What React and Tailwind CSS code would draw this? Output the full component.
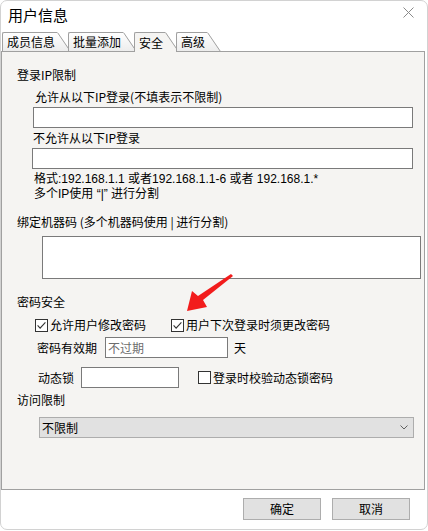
import React from "react";

function Check({ checked }) {
  return (
    <svg width="13" height="13" viewBox="0 0 13 13" className="block shrink-0">
      <rect x="0.5" y="0.5" width="12" height="12" fill="#fff" stroke="#333" />
      {checked && (
        <path d="M2.6 6.4 L5.1 9.1 L10.4 3.3" fill="none" stroke="#333" strokeWidth="1.1" />
      )}
    </svg>
  );
}

function Tab({ label, active, id }) {
  const grad = `tabg${id}`;
  return (
    <div className={`relative flex h-[20px] ${id > 0 ? "-ml-[3px]" : "ml-px"}`}>
      <div
        className={`flex items-center border-l border-t border-[#a0a0a0] rounded-tl-[2px] pl-[4px] pr-[2px] leading-[16px] ${
          active ? "bg-[#f5f4f2]" : "border-b bg-linear-to-b from-white to-[#ececec]"
        }`}
      >
        {label}
      </div>
      <svg width="14" height="20" viewBox="0 0 14 20" className="block">
        <defs>
          <linearGradient id={grad} x1="0" y1="0" x2="0" y2="1">
            <stop offset="0" stopColor="#ffffff" />
            <stop offset="1" stopColor="#ececec" />
          </linearGradient>
        </defs>
        <polygon points="0,0 1,0 14,20 0,20" fill={active ? "#f5f4f2" : `url(#${grad})`} />
        <line x1="0.5" y1="0.5" x2="13.8" y2="20" stroke="#a0a0a0" />
        {!active && <line x1="0" y1="19.5" x2="14" y2="19.5" stroke="#a0a0a0" />}
      </svg>
    </div>
  );
}

export default function App() {
  return (
    <div className="relative w-[428px] h-[531px] bg-white font-['Noto_Sans_CJK_SC','Noto_Sans',sans-serif] text-black overflow-hidden">
      <div className="w-[428px] h-[530px] border border-[#d2d2d2] rounded-[7px] bg-white flex flex-col">
        {/* title bar */}
        <div className="h-[31px] flex items-start justify-between">
          <div className="ml-[7px] mt-[4px] text-[15px] leading-[20px]">用户信息</div>
          <svg width="11" height="11" viewBox="0 0 11 11" className="mt-[6px] mr-[13px] block">
            <path d="M0.5 0.5 L10.5 10.5 M10.5 0.5 L0.5 10.5" stroke="#8a8a8a" strokeWidth="1" fill="none" />
          </svg>
        </div>

        {/* tabs */}
        <div className="relative z-10 flex h-[20px] text-[12px]">
          <Tab id={0} label="成员信息" />
          <Tab id={1} label="批量添加" />
          <Tab id={2} label="安全" active />
          <Tab id={3} label="高级" />
        </div>

        {/* panel */}
        <div className="-mt-px w-[424px] h-[439px] shrink-0 border border-[#a0a0a0] bg-[#f5f4f2] flex flex-col text-[12px] leading-[16px]">
          <div className="ml-[15px] mt-[15px]">登录IP限制</div>
          <div className="ml-[33px] mt-[6px]">允许从以下IP登录(不填表示不限制)</div>
          <div className="ml-[31px] mt-[2px] w-[380px] h-[21px] border border-[#7a7a7a] bg-white" />
          <div className="ml-[31px] mt-[2px]">不允许从以下IP登录</div>
          <div className="ml-[30px] mt-[2px] w-[381px] h-[21px] border border-[#7a7a7a] bg-white" />
          <div className="ml-[32px] mt-[3px] leading-[15px] font-['Liberation_Sans','Noto_Sans_CJK_SC',sans-serif]">
            格式:192.168.1.1 或者192.168.1.1-6 或者 192.168.1.*
          </div>
          <div className="ml-[32px] leading-[15px] font-['Liberation_Sans','Noto_Sans_CJK_SC',sans-serif]">
            多个IP使用 “|” 进行分割
          </div>
          <div className="ml-[15px] mt-[12px]">绑定机器码 (多个机器码使用 | 进行分割)</div>
          <div className="ml-[40px] mt-[6px] w-[379px] h-[43px] border border-[#7a7a7a] bg-white" />

          <div className="ml-[15px] mt-[15px]">密码安全</div>
          <div className="ml-[33px] mt-[7px] flex items-center h-[16px]">
            <div className="flex items-center gap-[2px]">
              <Check checked />
              <span>允许用户修改密码</span>
            </div>
            <div className="ml-[25px] flex items-center gap-[2px]">
              <Check checked />
              <span>用户下次登录时须更改密码</span>
            </div>
          </div>

          <div className="ml-[35px] mt-[4px] flex items-center h-[21px]">
            <span>密码有效期</span>
            <div className="ml-[8px] w-[123px] h-[21px] border border-[#7a7a7a] bg-white pl-[2px] flex items-center text-[#6d6d6d]">
              不过期
            </div>
            <span className="ml-[6px]">天</span>
          </div>

          <div className="ml-[36px] mt-[9px] flex items-center h-[21px]">
            <span>动态锁</span>
            <div className="ml-[7px] w-[98px] h-[21px] border border-[#7a7a7a] bg-white" />
            <div className="ml-[19px] flex items-center gap-[2px]">
              <Check />
              <span>登录时校验动态锁密码</span>
            </div>
          </div>

          <div className="ml-[15px] mt-[4px]">访问限制</div>
          <div className="ml-[37px] mt-[9px] w-[375px] h-[21px] border border-[#adadad] bg-[#e1e1e1] flex items-center justify-between pl-[2px] pr-[5px]">
            <span>不限制</span>
            <svg width="8" height="5" viewBox="0 0 8 5" className="block">
              <path d="M0.5 0.5 L4 4 L7.5 0.5" fill="none" stroke="#606060" strokeWidth="1" />
            </svg>
          </div>
        </div>

        {/* buttons */}
        <div className="mt-[8px] ml-[242px] flex gap-[11px] text-[12px]">
          <div className="w-[78px] h-[22px] border border-[#adadad] bg-[#e1e1e1] flex items-center justify-center">确定</div>
          <div className="w-[78px] h-[22px] border border-[#adadad] bg-[#e1e1e1] flex items-center justify-center">取消</div>
        </div>
      </div>

      {/* red annotation arrow */}
      <svg className="absolute left-0 top-0 pointer-events-none" width="428" height="531" viewBox="0 0 428 531">
        <polygon
          points="187,311 192,291 198,296 231,274 233,276 203,300 207,307"
          fill="#f21c1c"
        />
      </svg>
    </div>
  );
}
